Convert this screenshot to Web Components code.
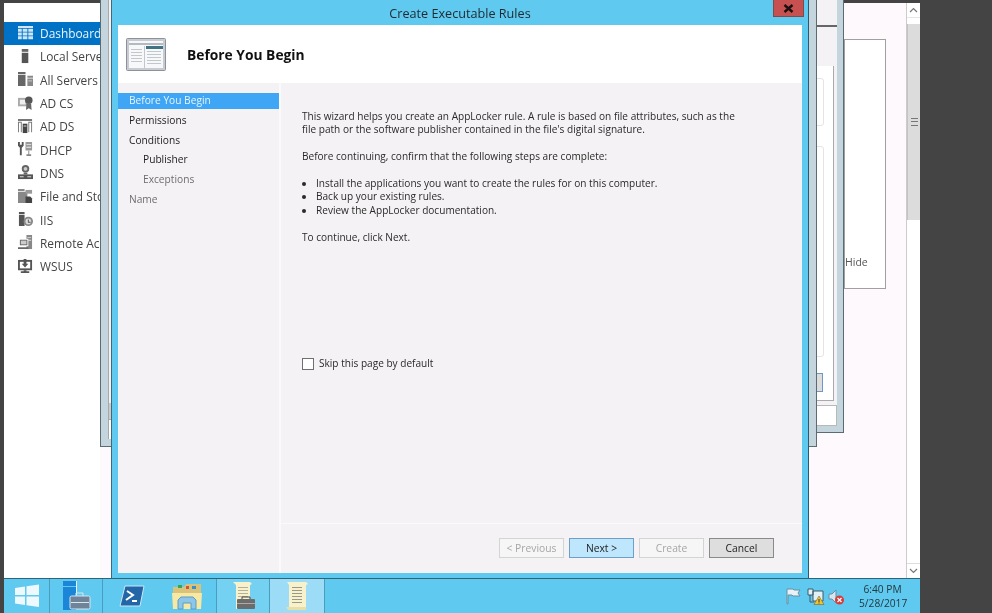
<!DOCTYPE html>
<html>
<head>
<meta charset="utf-8">
<style>
html, body { margin: 0; height: 100%; background: #444; overflow: hidden; }
body { font-family: "Open Sans", "Noto Sans", sans-serif; }
</style>
</head>
<body>
<server-desktop>
    <server-sidebar slot="sidebar"></server-sidebar>
    <back-window slot="windows"></back-window>
    <wizard-dialog slot="windows" title-text="Create Executable Rules" heading="Before You Begin">
        <wizard-step slot="steps" selected>Before You Begin</wizard-step>
        <wizard-step slot="steps">Permissions</wizard-step>
        <wizard-step slot="steps">Conditions</wizard-step>
        <wizard-step slot="steps" indent>Publisher</wizard-step>
        <wizard-step slot="steps" indent muted>Exceptions</wizard-step>
        <wizard-step slot="steps" muted>Name</wizard-step>

        <p>This wizard helps you create an AppLocker rule. A rule is based on file attributes, such as the<br>file path or the software publisher contained in the file's digital signature.</p>
        <p>Before continuing, confirm that the following steps are complete:</p>
        <ul>
            <li>Install the applications you want to create the rules for on this computer.</li>
            <li>Back up your existing rules.</li>
            <li>Review the AppLocker documentation.</li>
        </ul>
        <p>To continue, click Next.</p>

        <wizard-button slot="buttons" disabled>&lt; Previous</wizard-button>
        <wizard-button slot="buttons" primary>Next &gt;</wizard-button>
        <wizard-button slot="buttons" disabled>Create</wizard-button>
        <wizard-button slot="buttons" cancel>Cancel</wizard-button>
    </wizard-dialog>
    <server-taskbar slot="taskbar"></server-taskbar>
</server-desktop>

<script>
// Page shell: dark strips around the remote screen
class ServerDesktop extends HTMLElement {
    constructor() {
        super();
        this.attachShadow({ mode: "open" });
        this.shadowRoot.innerHTML = `
            <style>
                :host { display: block; width: 992px; height: 613px; background: #444; overflow: hidden; filter: blur(0.35px); }
                .screen { width: 916px; height: 613px; margin-left: 4px; display: flex; flex-direction: column; }
                .work { flex: 1; position: relative; margin-top: 3px; display: flex; background: #fdf9fd; overflow: visible; }
                .panel {
                    position: absolute; left: 840px; top: 36px; width: 40px; height: 248px;
                    background: #fff; border: 1px solid #a0a0a0;
                    font-size: 10.5px; color: #555; display: flex; align-items: flex-end;
                }
                .panel span { margin: 0 0 19px 0; line-height: 14px; }
                .scroll { margin-left: auto; width: 14px; }
            </style>
            <div class="screen">
                <div class="work">
                    <slot name="sidebar"></slot>
                    <div class="panel"><span>Hide</span></div>
                    <slot name="windows"></slot>
                    <main-scrollbar class="scroll"></main-scrollbar>
                </div>
                <slot name="taskbar"></slot>
            </div>
        `;
    }
}

class MainScrollbar extends HTMLElement {
    constructor() {
        super();
        this.attachShadow({ mode: "open" });
        this.shadowRoot.innerHTML = `
            <style>
                :host { display: flex; flex-direction: column; background: #fff; border-left: 1px solid #ccc; height: 100%; box-sizing: border-box; }
                .btn { height: 15px; display: flex; align-items: center; justify-content: center; border-bottom: 1px solid #e6e6e6; box-sizing: border-box; }
                .btn.down { border-bottom: 0; border-top: 1px solid #ddd; margin-top: auto; }
                .thumb { margin-top: 6px; height: 196px; background: #dcdcdc; border-left: 1px solid #c4c4c4; display: flex; align-items: center; justify-content: center; }
                .grip { width: 7px; height: 6px; border-top: 1px solid #777; border-bottom: 1px solid #777; position: relative; }
                .grip::after { content: ""; position: absolute; left: 0; right: 0; top: 2px; height: 1px; background: #777; }
            </style>
            <div class="btn"><svg width="9" height="6" viewBox="0 0 9 6"><path d="M1 5l3.5-3.5L8 5" fill="none" stroke="#777" stroke-width="1.2"/></svg></div>
            <div class="thumb"><div class="grip"></div></div>
            <div class="btn down"><svg width="9" height="6" viewBox="0 0 9 6"><path d="M1 1l3.5 3.5L8 1" fill="none" stroke="#777" stroke-width="1.2"/></svg></div>
        `;
    }
}

// Server Manager navigation, icons drawn in the flat grey style
const SIDEBAR_ICONS = {
    dashboard: `<path fill="#cfe6f7" d="M0 0h16v2H0zM0 3h4v3H0zM5 3h5v3H5zM11 3h5v3h-5zM0 7h4v3H0zM5 7h5v3H5zM11 7h5v3h-5zM0 11h4v3H0zM5 11h5v3H5zM11 11h5v3h-5z"/>`,
    local: `<path fill="#666" d="M4 0h7v3H4z"/><path fill="#555" d="M4 4h7v11H4z"/>`,
    all: `<path fill="#666" d="M0 0h8v2H0zM0 3h8v12H0z"/><path fill="#888" d="M10 4h6v2h-6zM10 7h6v8h-6z"/><path fill="#ccc" d="M11 9h4v1h-4z"/>`,
    adcs: `<path fill="#aaa" d="M0 2h10v9H0z"/><path fill="#eee" d="M2 4h6v5H2z"/><circle cx="11.500" cy="4.500" r="4" fill="#555"/><path fill="#666" d="M9 8l-.5 7 3-2 3 2-.5-7z"/>`,
    adds: `<path fill="#777" d="M0 0h15v2H0zM0 3h1v11H0zM3 3h1v11H3zM0 3h4v1H0zM11 3h1v11h-1zM14 3h1v11h-1zM11 3h4v1h-4z"/><path fill="#444" d="M5 5h5v10H5z"/><path fill="#ddd" d="M6 7h3v1H6z"/>`,
    dhcp: `<path fill="#555" d="M0 0h2v3h2V0h2v4L4 6v8H2V6L0 4z"/><path fill="#999" d="M8 0h7v9H8z"/><path fill="#eee" d="M9 2h5v1H9zM9 5h5v1H9z"/><path fill="#888" d="M11 9h1v4h2v2H9v-2h2z"/>`,
    dns: `<circle cx="8" cy="4" r="4" fill="#666"/><circle cx="8" cy="4" r="2" fill="#ccc"/><path fill="#666" d="M6 8h4v2H6z"/><path fill="#555" d="M0 10h16v5H0z"/><path fill="#ddd" d="M2 12h4v1H2zM10 12h4v1h-4z"/>`,
    files: `<path fill="#888" d="M0 0h7v2H0zM0 3h10v12H0z"/><path fill="#999" d="M8 1h7v4H8z"/><path fill="#444" d="M8 8h5l2 2v5H8z"/>`,
    iis: `<path fill="#555" d="M1 0h6v2H1zM1 3h6v12H1z"/><circle cx="11" cy="10" r="5" fill="#888"/><circle cx="11" cy="10" r="3" fill="#ddd"/><path fill="#555" d="M10.500 8h1v2.500h2v1h-3z"/>`,
    remote: `<path fill="#888" d="M9 0h6v15H9z"/><path fill="#ddd" d="M10 2h4v1h-4zM10 5h4v1h-4z"/><path fill="#fff" d="M1 4h10v8H1z"/><path fill="#666" d="M2 5h8v6H2zM0 13h11v2H0z"/><path fill="#ccc" d="M3 6h6v4H3z"/>`,
    wsus: `<path fill="#555" d="M0 1h15v11H0z"/><path fill="#fff" d="M2 3h11v7H2z"/><path fill="#555" d="M6 12h3v1h3v2H3v-2h3zM6 0h3v5h2L7.500 9 4 5h2z"/>`
};

class ServerSidebar extends HTMLElement {
    constructor() {
        super();
        this.attachShadow({ mode: "open" });
        const rows = [
            ["dashboard", "Dashboard"], ["local", "Local Servers"], ["all", "All Servers"],
            ["adcs", "AD CS"], ["adds", "AD DS"], ["dhcp", "DHCP"], ["dns", "DNS"],
            ["files", "File and Storage"], ["iis", "IIS"], ["remote", "Remote Access"], ["wsus", "WSUS"]
        ];
        this.shadowRoot.innerHTML = `
            <style>
                :host { display: block; width: 96px; background: #fff; padding-top: 18.5px; box-sizing: border-box; flex: none; overflow: hidden; }
                .row { height: 23.3px; display: flex; align-items: center; gap: 7px; padding-left: 14px; font-size: 11.9px; color: #444; white-space: nowrap; }
                .row.on { background: #0072c6; color: #e8f4fc; }
                svg { flex: none; width: 15px; height: 15px; }
            </style>
            ${rows.map(([icon, label], i) => `
                <div class="row ${i === 0 ? "on" : ""}">
                    <svg viewBox="0 0 16 16">${SIDEBAR_ICONS[icon]}</svg><span>${label}</span>
                </div>`).join("")}
        `;
    }
}

// The two Server Manager dialogs stacked behind the wizard
class BackWindow extends HTMLElement {
    constructor() {
        super();
        this.attachShadow({ mode: "open" });
        this.shadowRoot.innerHTML = `
            <style>
                :host { display: contents; }
                .win { position: absolute; top: -3px; background: #c5d5dd; border: 1px solid #5b6b72; border-top: 0; box-sizing: border-box; }
                .a { left: 700px; width: 140px; height: 433px; }
                .a .head { position: absolute; left: 0; right: 6px; top: 0; height: 27px; background: #f5f2f5; border-bottom: 2px solid #666; box-sizing: border-box; }
                .a .face { position: absolute; left: 0; right: 6px; top: 27px; height: 379px; background: #f5f2f5; }
                .a .inner { position: absolute; left: 0; right: 3px; top: 39px; height: 335px; background: #fff; border-right: 1px solid #aaa; border-bottom: 1px solid #aaa; box-sizing: border-box; }
                .a .box { position: absolute; left: 0; width: 119px; border: 1px solid #e4e4e4; border-radius: 3px; box-sizing: border-box; }
                .a .b1 { top: 12px; height: 48px; }
                .a .b2 { top: 80px; height: 211px; }
                .a .action { position: absolute; left: 0; width: 118px; top: 307px; height: 19px; background: #ddd; border: 1px solid #6a9ac4; box-sizing: border-box; }
                .a .field { position: absolute; left: 0; right: 6px; top: 405px; height: 21px; background: #fff; border: 1px solid #b8b8b8; box-sizing: border-box; }
                .b { left: 96px; width: 717px; height: 447px; }
                .b .face { position: absolute; left: 7px; right: 7px; top: 0; height: 439px; background: #f5f2f5; border-left: 1px solid #a8a8a8; box-sizing: border-box; }
                .b .field { position: absolute; left: 0; width: 20px; top: 403px; height: 16px; background: #ccc; border-bottom: 1px solid #aaa; }
                .b .low { position: absolute; left: 0; width: 20px; top: 420px; height: 19px; background: #fff; }
            </style>
            <div class="win a">
                <div class="head"></div>
                <div class="face"><div class="inner"><div class="box b1"></div><div class="box b2"></div><div class="action"></div></div></div>
                <div class="field"></div>
            </div>
            <div class="win b"><div class="face"><div class="field"></div><div class="low"></div></div></div>
        `;
    }
}

class WizardStep extends HTMLElement {
    constructor() {
        super();
        this.attachShadow({ mode: "open" });
        this.shadowRoot.innerHTML = `
            <style>
                :host { display: block; height: 16px; margin-bottom: 3.7px; padding-left: 11px; line-height: 15px; font-size: 10.2px; color: #222; white-space: nowrap; }
                :host([selected]) { background: #3ea6f5; color: #e6f4fe; }
                :host([indent]) { padding-left: 25px; }
                :host([muted]) { color: #6e6e6e; }
            </style>
            <slot></slot>
        `;
    }
}

class WizardButton extends HTMLElement {
    constructor() {
        super();
        this.attachShadow({ mode: "open" });
        this.shadowRoot.innerHTML = `
            <style>
                :host { display: flex; width: 65px; height: 20px; align-items: center; justify-content: center; box-sizing: border-box; font-size: 10.3px; border: 1px solid #c8c8c8; background: #f6f6f6; color: #222; }
                :host([disabled]) { color: #a6a6a6; border-color: #d4d4d4; }
                :host([primary]) { background: #bee6fd; border-color: #6f9fc6; }
                :host([cancel]) { background: #dedede; border-color: #8a8a8a; }
            </style>
            <slot></slot>
        `;
    }
}

class WizardDialog extends HTMLElement {
    constructor() {
        super();
        this.attachShadow({ mode: "open" });
        const titleText = this.getAttribute("title-text");
        const heading = this.getAttribute("heading");
        this.shadowRoot.innerHTML = `
            <style>
                :host {
                    position: absolute; left: 107px; top: -3px; width: 698px; height: 578px;
                    box-sizing: border-box; background: #5fc9ef;
                    border-left: 1px solid #3d6a7c; border-right: 1px solid #2f5a6c;
                    display: flex; flex-direction: column; padding: 0 6px 5px;
                }
                .title { height: 25px; flex: none; display: flex; align-items: center; justify-content: center; font-size: 12.65px; color: #1d2a30; position: relative; }
                .close {
                    position: absolute; right: -2px; top: 0; width: 31px; height: 17px; box-sizing: border-box;
                    background: #c75050; border: 1px solid #7d4b48; border-top: 0;
                    display: flex; align-items: center; justify-content: center;
                }
                .head { height: 58px; flex: none; background: #fff; display: flex; align-items: center; padding: 1px 0 0 8px; box-sizing: border-box; gap: 21px; }
                h1 { margin: 0; font-size: 13.8px; font-weight: 700; color: #111; }
                .cols { flex: 1; display: grid; grid-template-columns: 163px 1fr; min-height: 0; }
                .steps { background: #f5f2f5; padding-top: 10.3px; border-right: 2px solid #fbfafb; }
                .main { background: #f5f2f5; display: flex; flex-direction: column; }
                .text { flex: 1; padding: 27px 0 0 21px; font-size: 10.08px; line-height: 13.4px; color: #2a2a2a; position: relative; white-space: nowrap; }
                .foot { height: 50px; flex: none; border-top: 1px solid #fbfafb; display: flex; gap: 5px; padding: 14px 0 0 218px; box-sizing: border-box; }
                .skip { position: absolute; left: 21px; top: 274px; display: flex; align-items: center; gap: 5px; font-size: 10.08px; }
                .box { width: 12px; height: 12px; box-sizing: border-box; border: 1px solid #707070; background: #fff; }
                ::slotted(p) { margin: 0 0 13.4px; }
                ::slotted(ul) { margin: 0 0 13.4px; padding: 0 0 0 14px; list-style: disc; }
            </style>
            <div class="title">${titleText}
                <div class="close"><svg width="11" height="9" viewBox="0 0 11 9"><path d="M1.500 1l8 7M9.500 1l-8 7" stroke="#1b0f0f" stroke-width="2.400" fill="none"/></svg></div>
            </div>
            <div class="head">
                <svg width="40" height="33" viewBox="0 0 40 33">
                    <rect x=".5" y=".5" width="39" height="32" rx="1" fill="#c8ccd2" stroke="#8b929a"/>
                    <rect x="3" y="3" width="34" height="27" fill="#f7f8f9"/>
                    <path fill="#b4bac0" d="M3 5h34v2H3z"/>
                    <path fill="#3f7187" d="M20 8h17v3H20z"/>
                    <path fill="#c2c7cc" d="M18 8h1v22h-1zM5 11h11v1H5zM5 14h11v1H5zM5 17h11v1H5zM5 20h11v1H5zM5 23h11v1H5zM21 13h14v1H21zM21 16h14v1H21zM21 19h14v1H21zM21 22h14v1H21zM21 25h14v1H21z"/>
                </svg>
                <h1>${heading}</h1>
            </div>
            <div class="cols">
                <div class="steps"><slot name="steps"></slot></div>
                <div class="main">
                    <div class="text">
                        <slot></slot>
                        <label class="skip"><span class="box"></span>Skip this page by default</label>
                    </div>
                    <div class="foot"><slot name="buttons"></slot></div>
                </div>
            </div>
        `;
    }
}

class ServerTaskbar extends HTMLElement {
    constructor() {
        super();
        this.attachShadow({ mode: "open" });
        this.shadowRoot.innerHTML = `
            <style>
                :host { display: flex; height: 35px; flex: none; background: #5fc9ef; border-top: 1px solid #2f6478; box-sizing: border-box; position: relative; z-index: 2; color: #1d2a30; }
                .item { height: 100%; display: flex; align-items: center; justify-content: center; box-sizing: border-box; border-right: 1px solid #4b9dbd; flex: none; }
                .pale { background: #74d1f1; }
                .on { background: #9cdcf6; }
                .tray { margin-left: auto; display: flex; align-items: center; gap: 0; padding-right: 14px; }
                .clock { margin-left: 15px; font-size: 10.2px; line-height: 14px; text-align: center; width: 47px; color: #23383f; }
            </style>
            <div class="item" style="width:46px">
                <svg width="24" height="24" viewBox="0 0 24 24"><path fill="#eef9fd" d="M0 4l10-1.500V11H0zM11.500 2.300L24 .5V11H11.500zM0 12.500h10V21L0 19.500zM11.500 12.500H24V23l-12.500-1.700z"/></svg>
            </div>
            <div class="item" style="width:53px">
                <svg width="30" height="30" viewBox="0 0 30 30">
                    <path fill="#1b86d8" d="M2 0h13v5H2zM2 6h13v23H2z"/><path fill="#eaf4fb" d="M15 0h1v14h-1z"/>
                    <rect x="9" y="15" width="20" height="13" rx="1.500" fill="#6f8399" stroke="#d8e6f0"/>
                    <path fill="none" stroke="#d8e6f0" d="M15 15v-3h7v3"/><path fill="#d8e6f0" d="M10 21h18v1H10z"/>
                </svg>
            </div>
            <div class="item" style="width:114px; justify-content:flex-start; padding-left:16px; position:relative">
                <svg width="26" height="22" viewBox="0 0 26 22"><path fill="#2266a8" stroke="#cfe6f4" d="M6 1h19l-4 20H1z"/><path fill="none" stroke="#fff" stroke-width="2" d="M8 6l6 4-7 5M13 16h5"/></svg>
                <svg style="margin-left:27px" width="30" height="27" viewBox="0 0 30 27">
                    <path fill="#d9c27a" d="M1 4h11l2-3h15v24H1z"/><path fill="#f7e8a4" d="M0 10h30l-1 16H1z"/>
                    <path fill="#3aa648" d="M6 2h4v3H6z"/><path fill="#d8503a" d="M14 3h3v3h-3z"/><path fill="#3a8fc8" d="M20 3h4v3h-4z"/>
                    <path fill="#8cc6e8" stroke="#5b9cc6" d="M6 26v-9l3-3h12l3 3v9h-5v-6h-8v6z"/>
                </svg>
            </div>
            <div class="item pale" style="width:53px">
                <svg width="28" height="30" viewBox="0 0 28 30">
                    <path fill="#f8f2cc" d="M4 1h17l2 2-2 1v24H7V4z"/><path fill="#b4b09a" d="M9 6h10v1H9zM9 9h10v1H9zM9 12h10v1H9zM9 15h10v1H9z"/>
                    <rect x="8" y="18" width="18" height="10" rx="1" fill="#6c6c6c"/><path fill="none" stroke="#444" d="M13 18v-2h8v2"/><path fill="#aaa" d="M8 22h18v1H8z"/>
                </svg>
            </div>
            <div class="item on" style="width:55px">
                <svg width="26" height="30" viewBox="0 0 26 30">
                    <path fill="#f8f2cc" d="M3 1h19l2 2-2 1v23H5V4z"/><path fill="#e8dfa8" d="M2 26h20v3H4z"/><path fill="#9a988a" d="M8 6h10v1H8zM8 9h10v1H8zM8 12h10v1H8zM8 15h10v1H8zM8 18h10v1H8zM8 21h10v1H8z"/>
                </svg>
            </div>
            <div class="tray">
                <svg width="16" height="17" viewBox="0 0 16 17"><path fill="#e6f2f8" stroke="#6c8ea0" d="M2 1h6l1 1h6l-2 3 2 3H8L7 7H3v9H2z"/></svg>
                <svg width="18" height="17" viewBox="0 0 18 17" style="margin-left:6px">
                    <path fill="#dff0f7" stroke="#405a66" d="M1 1h5v6H1zM6 3h10v10H6z"/><path fill="none" stroke="#405a66" d="M3 7v7h4"/>
                    <path fill="#f4c430" stroke="#6a5310" stroke-width=".5" d="M12 8l5 8.500H7z"/><path fill="#333" d="M11.500 11h1v3h-1zM11.500 14.500h1v1h-1z"/>
                </svg>
                <svg width="16" height="17" viewBox="0 0 16 17" style="margin-left:3px">
                    <path fill="#d6e6ee" stroke="#6c8ea0" d="M1 6h3l4-4v13l-4-4H1z"/>
                    <circle cx="11.500" cy="12" r="4.500" fill="#d83b3b"/><path stroke="#fff" stroke-width="1.300" d="M9.500 10l4 4M13.500 10l-4 4"/>
                </svg>
                <div class="clock">6:40 PM<br>5/28/2017</div>
            </div>
        `;
    }
}

customElements.define("server-desktop", ServerDesktop);
customElements.define("main-scrollbar", MainScrollbar);
customElements.define("server-sidebar", ServerSidebar);
customElements.define("back-window", BackWindow);
customElements.define("wizard-step", WizardStep);
customElements.define("wizard-button", WizardButton);
customElements.define("wizard-dialog", WizardDialog);
customElements.define("server-taskbar", ServerTaskbar);
</script>
</body>
</html>
